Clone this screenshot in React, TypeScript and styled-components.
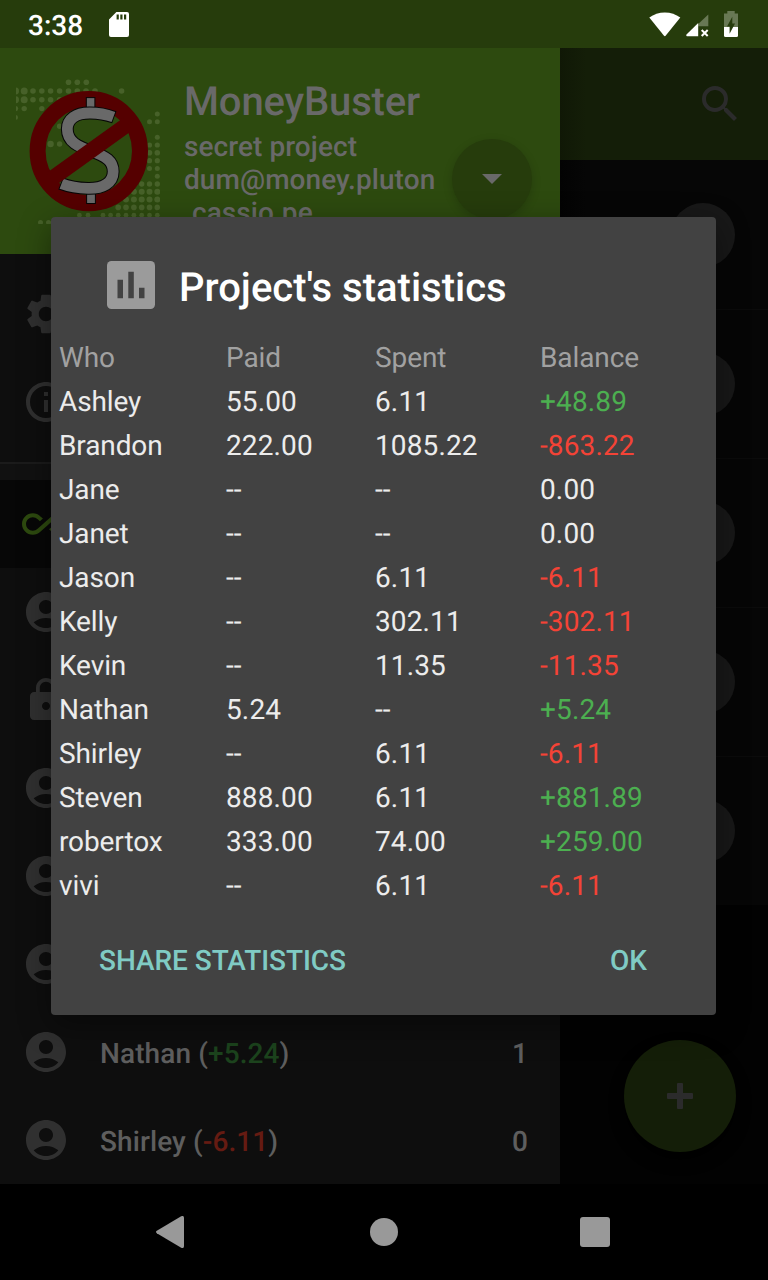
import React from "react";
import styled, { createGlobalStyle } from "styled-components";
import {
  MdSettings,
  MdInfoOutline,
  MdAllInclusive,
  MdAccountCircle,
  MdLock,
  MdSearch,
  MdArrowDropDown,
} from "react-icons/md";

const GlobalStyle = createGlobalStyle`
  *, *::before, *::after { box-sizing: border-box; }
  body {
    margin: 0;
    background: #000;
    font-family: Roboto, "Liberation Sans", sans-serif;
    text-rendering: geometricPrecision;
  }
  svg { display: block; flex: none; }
`;

const Screen = styled.div`
  position: relative;
  display: grid;
  grid-template-rows: 48px 1136px 96px;
  width: 768px;
  height: 1280px;
  overflow: hidden;
  background: #000;
`;

const StatusBar = styled.header`
  display: flex;
  align-items: center;
  padding: 0 30px 0 28px;
  background: #263c0c;
  color: #fff;
`;

const Clock = styled.span`
  font-size: 28px;
  font-weight: 500;
  line-height: 46px;
  padding-top: 3px;
  width: 81px;
`;

const StatusIcons = styled.div`
  display: flex;
  align-items: center;
  margin-left: auto;
`;

const SignalSlot = styled.div`
  padding: 2px 15px 0 5px;
`;

const Body = styled.div`
  display: flex;
  min-height: 0;
`;

const Drawer = styled.aside`
  position: relative;
  z-index: 1;
  width: 560px;
  flex: none;
  overflow: hidden;
  background: #0e0e0e;
`;

const DrawerHeader = styled.div`
  display: flex;
  height: 206px;
  padding: 28px 28px 0 16px;
  overflow: hidden;
  background: #2d4a0f;
  color: #696969;
`;

const Account = styled.div`
  flex: 1;
  margin-left: 24px;
`;

const AppName = styled.h1`
  margin: 0;
  padding-top: 1px;
  font-size: 40px;
  font-weight: 500;
  line-height: 50px;
  letter-spacing: -0.15px;
`;

const AccountLine = styled.div<{ $indent?: boolean }>`
  padding-left: ${(p) => (p.$indent ? 8 : 0)}px;
  font-size: 28px;
  font-weight: 500;
  line-height: 33px;
  letter-spacing: 0.07px;
  white-space: nowrap;

  ${AppName} + & { margin-top: 3px; }
`;

const ExpandButton = styled.button`
  display: flex;
  align-items: center;
  justify-content: center;
  width: 80px;
  height: 80px;
  margin-top: 63px;
  padding: 0 0 2px;
  border: 0;
  border-radius: 50%;
  background: #263c0c;
  color: #696969;
  box-shadow: 0 3px 10px rgba(0, 0, 0, 0.18);
`;

const MenuList = styled.nav`
  padding: 16px 0;
`;

const MenuItem = styled.div<{ $selected?: boolean; $tint?: string }>`
  display: flex;
  align-items: center;
  height: 88px;
  padding: 0 32px 0 22px;
  background: ${(p) => (p.$selected ? "#070707" : "transparent")};
  color: ${(p) => p.$tint ?? "#303030"};
`;

const MenuLabel = styled.span`
  margin-left: 30px;
  padding-top: 2px;
  font-size: 28px;
  font-weight: 500;
  letter-spacing: 0.1px;
  color: #5e5e5e;
`;

const MenuCount = styled(MenuLabel)`
  margin-left: auto;
`;

const Amount = styled.span<{ $negative?: boolean }>`
  color: ${(p) => (p.$negative ? "#651b12" : "#1c431d")};
`;

const MemberSection = styled.div`
  padding-top: 16px;
  border-top: 2px solid #1b1b1b;
  background: linear-gradient(#111, #111) 0 0 / 100% 16px no-repeat;
`;

const Content = styled.main`
  position: relative;
  flex: 1;
  background: #020202;
`;

const Toolbar = styled.div`
  display: flex;
  align-items: center;
  justify-content: flex-end;
  height: 112px;
  padding-right: 24px;
  background: linear-gradient(90deg, #101806 0, #141e08 26px);
  color: #2b2b2b;
`;

const BillRow = styled.div`
  display: flex;
  align-items: center;
  justify-content: flex-end;
  height: 149px;
  padding: 1px 33px 0 0;
  background: linear-gradient(90deg, #030303 0, #060606 26px);

  & + & { box-shadow: inset 0 1px 0 #0b0b0b; }
`;

const Avatar = styled.div`
  width: 64px;
  height: 64px;
  border-radius: 50%;
  background: #181818;
`;

const AddButton = styled.button`
  position: absolute;
  right: 32px;
  bottom: 32px;
  display: flex;
  align-items: center;
  justify-content: center;
  width: 112px;
  height: 112px;
  padding: 0;
  border: 0;
  border-radius: 50%;
  background: #141e08;
  box-shadow: 0 8px 14px #000;
`;

const NavBar = styled.footer`
  display: grid;
  grid-template-columns: 28px 28px 30px;
  column-gap: 186px;
  align-items: center;
  padding-left: 156px;
  background: #000;

  svg:nth-child(3) { margin-left: -4px; }
`;

const Dialog = styled.section`
  position: absolute;
  z-index: 2;
  top: 217px;
  left: 51px;
  width: 665px;
  height: 798px;
  border-radius: 4px;
  background: #424242;
  box-shadow: 0 10px 32px rgba(0, 0, 0, 0.42);
`;

const DialogTitle = styled.div`
  display: flex;
  align-items: center;
  gap: 24px;
  height: 118px;
  padding: 18px 56px 0;

  h2 {
    margin: 0;
    padding-top: 5px;
    color: #fff;
    font-size: 40px;
    font-weight: 500;
    line-height: 48px;
  }
`;

const StatsTable = styled.div`
  display: grid;
  grid-template-columns: 167px 149px 165px 1fr;
  grid-auto-rows: 44px;
  align-items: center;
  padding: 1px 8px 0;
  font-size: 28px;
  line-height: 44px;
`;

const Cell = styled.span<{ $tone?: "head" | "plus" | "minus" }>`
  letter-spacing: -0.1px;
  color: ${(p) =>
    p.$tone === "head"
      ? "#a1a1a1"
      : p.$tone === "plus"
        ? "#4caf50"
        : p.$tone === "minus"
          ? "#f44336"
          : "#ececec"};
`;

const NumberCell = styled(Cell)`
  letter-spacing: 0.13px;
`;

const DialogActions = styled.div`
  display: flex;
  justify-content: space-between;
  padding: 29px 69px 0 48px;
`;

const TextButton = styled.button`
  padding: 0;
  border: 0;
  background: none;
  color: #80cbc4;
  font: 500 28px/48px Roboto, "Liberation Sans", sans-serif;
  letter-spacing: -0.05px;
  text-rendering: inherit;
`;

/* Halftone map dots behind the logo: [y, radius, ...x] */
const DOTS: number[][] = [
  [82.3, 2.8, 68.5, 77.3, 86.3],
  [91, 2.8, 33, 41.8, 50.6, 59.6, 68.5, 77.3, 86, 95, 121.6],
  [91, 3.5, 15.5, 24.2],
  [99.7, 2.8, 33, 41.8, 50.6, 59.6],
  [99.7, 3.5, 15.5, 24.2],
  [108.6, 2.7, 15.5, 24.2, 41.8],
  [117.4, 2.5, 15.5],
  [126.3, 2.7, 59.6],
  [144, 3.2, 50.6],
  [144, 2.7, 59.6],
  [114, 2.5, 157.3],
  [121.8, 2.5, 149.5, 157.3],
  [137.3, 2.5, 157.3],
  [145, 2.6, 149.5, 157.3],
  [152.8, 2.8, 149.5, 157.3],
  [160.7, 2.6, 149.5, 157.3],
  [168.5, 2.5, 149.5, 157.3],
  [176.2, 2.5, 157.3],
  [184, 2.7, 141.7, 149.5, 157.3],
  [191.8, 3, 133.9, 141.7, 149.5, 157.3],
  [199.6, 3, 126, 133.9, 141.7, 149.5, 157.3],
  [207.4, 2.8, 118.2, 126, 133.9, 141.7, 149.5, 157.3],
  [215.2, 2.4, 79.4, 88, 103, 110.6, 118.2, 126, 133.9, 141.7, 149.5, 157.3],
  [222.5, 2.5, 40.5, 48.5],
];

const S_BODY =
  "C104 113.6 96 112.9 89.500 113C76 113 67.300 119 67.300 129C67.300 142 78 146.500 92 151.500C106 156.500 113.200 161 113.200 171.500C113.200 183 103 188.700 88 188.400C78 188.200 70 187";

const Logo = () => (
  <svg width="144" height="148" viewBox="16 76 144 148">
    <g fill="#476129">
      {DOTS.map(([y, r, ...xs]) =>
        xs.map((x) => <circle key={`${x}-${y}-${r}`} cx={x} cy={y} r={r} />),
      )}
    </g>
    <ellipse cx="88.8" cy="151.1" rx="51.2" ry="52.1" fill="none" stroke="#550000" strokeWidth="16" />
    <g fill="#696969" stroke="#060606" strokeWidth="1">
      <rect x="86.3" y="97.6" width="8.6" height="11" />
      <rect x="86.6" y="192" width="8.8" height="11.5" />
    </g>
    <path d={`M114.300 117.300${S_BODY} 60.600 183.500`} fill="none" stroke="#060606" strokeWidth="12.8" />
    <path d={`M113.400 117${S_BODY} 61.500 183.800`} fill="none" stroke="#696969" strokeWidth="10.8" />
    <path d="M51 179.2L128 124" stroke="#550000" strokeWidth="15.4" />
  </svg>
);

const SdCard = () => (
  <svg width="20" height="25" viewBox="0 0 20 25" fill="#fff">
    <path fillRule="evenodd" d="M7.4 0H18a2 2 0 0 1 2 2v21a2 2 0 0 1-2 2H2a2 2 0 0 1-2-2V7.4zM7.6 2.6v5h2.2v-5zm3.7 0v5h2.2v-5zm3.7 0v5h2.2v-5z" />
  </svg>
);

const Wifi = () => (
  <svg width="32" height="25" viewBox="0 0 32 25">
    <path fill="#fff" d="M.3 5.6C4.700 2.200 10 .4 15.800.4s11.100 1.800 15.500 5.200L16.800 23.600a1.300 1.300 0 0 1-2 0z" />
  </svg>
);

const Signal = () => (
  <svg width="23" height="23" viewBox="0 0 23 23">
    <path fill="#687854" d="M22.300.6V12.200H12.200V10z" />
    <path fill="#fff" d="M12.200 9V22.200H.9Q-.2 21.500.5 20.600z" />
    <path stroke="#fff" strokeWidth="2" d="m15.700 16 6 6m0-6-6 6" />
  </svg>
);

const Battery = () => (
  <svg width="14" height="26" viewBox="0 0 14 26">
    <path fill="#687854" d="M3.300 0h7.400v2.500H14V16H0V2.500h3.300z" />
    <path fill="#fff" d="M0 16h14v8.500q0 1.500-1.500 1.500h-11Q0 26 0 24.500z" />
    <path fill="#263c0c" d="M8.300 5.800v6.600H11L5.600 22.800v-7.300H3z" />
  </svg>
);

const ChartIcon = () => (
  <svg width="48" height="48" viewBox="0 0 48 48">
    <rect width="48" height="48" rx="4.500" fill="#9b9b9b" />
    <path fill="#424242" d="M10.500 18.700H16V37.300h-5.500zM21.300 10.700h5.500v26.600h-5.500zM32 26.700h5.500v10.600H32z" />
  </svg>
);

type Stat = [string, string, string, string];

const STATS: Stat[] = [
  ["Ashley", "55.00", "6.11", "+48.89"],
  ["Brandon", "222.00", "1085.22", "-863.22"],
  ["Jane", "--", "--", "0.00"],
  ["Janet", "--", "--", "0.00"],
  ["Jason", "--", "6.11", "-6.11"],
  ["Kelly", "--", "302.11", "-302.11"],
  ["Kevin", "--", "11.35", "-11.35"],
  ["Nathan", "5.24", "--", "+5.24"],
  ["Shirley", "--", "6.11", "-6.11"],
  ["Steven", "888.00", "6.11", "+881.89"],
  ["robertox", "333.00", "74.00", "+259.00"],
  ["vivi", "--", "6.11", "-6.11"],
];

const toneOf = (value: string) =>
  value.startsWith("+") ? "plus" : value.startsWith("-") ? "minus" : undefined;

export default function App() {
  return (
    <>
      <GlobalStyle />
      <Screen>
        <StatusBar>
          <Clock>3:38</Clock>
          <SdCard />
          <StatusIcons>
            <Wifi />
            <SignalSlot><Signal /></SignalSlot>
            <Battery />
          </StatusIcons>
        </StatusBar>

        <Body>
          <Drawer>
            <DrawerHeader>
              <Logo />
              <Account>
                <AppName>MoneyBuster</AppName>
                <AccountLine>secret project</AccountLine>
                <AccountLine>dum@money.pluton</AccountLine>
                <AccountLine $indent>cassio.pe</AccountLine>
              </Account>
              <ExpandButton>
                <MdArrowDropDown size={48} />
              </ExpandButton>
            </DrawerHeader>
            <MenuList>
              <MenuItem><MdSettings size={48} /></MenuItem>
              <MenuItem><MdInfoOutline size={48} /></MenuItem>
            </MenuList>
            <MemberSection>
              <MenuItem $selected $tint="#2d4a0f"><MdAllInclusive size={48} /></MenuItem>
              <MenuItem><MdAccountCircle size={48} /></MenuItem>
              <MenuItem><MdLock size={48} /></MenuItem>
              <MenuItem><MdAccountCircle size={48} /></MenuItem>
              <MenuItem><MdAccountCircle size={48} /></MenuItem>
              <MenuItem><MdAccountCircle size={48} /></MenuItem>
              <MenuItem>
                <MdAccountCircle size={48} />
                <MenuLabel>Nathan (<Amount>+5.24</Amount>)</MenuLabel>
                <MenuCount>1</MenuCount>
              </MenuItem>
              <MenuItem>
                <MdAccountCircle size={48} />
                <MenuLabel>Shirley (<Amount $negative>-6.11</Amount>)</MenuLabel>
                <MenuCount>0</MenuCount>
              </MenuItem>
            </MemberSection>
          </Drawer>

          <Content>
            <Toolbar><MdSearch size={48} /></Toolbar>
            {[0, 1, 2, 3, 4].map((row) => (
              <BillRow key={row}><Avatar /></BillRow>
            ))}
            <AddButton>
              <svg width="26" height="26" viewBox="0 0 26 26" fill="#2b2b2b">
                <rect x="10" width="6" height="26" rx="1" />
                <rect y="10" width="26" height="6" rx="1" />
              </svg>
            </AddButton>
          </Content>
        </Body>

        <NavBar>
          <svg width="28" height="32" viewBox="0 0 28 32" fill="#999">
            <path d="M25.200.3Q28-.8 28 2v28q0 2.800-2.800 1.700L.8 17.200Q-.8 16 .8 14.800z" />
          </svg>
          <svg width="28" height="28" viewBox="0 0 28 28" fill="#999">
            <circle cx="14" cy="14" r="14" />
          </svg>
          <svg width="30" height="30" viewBox="0 0 30 30" fill="#999">
            <rect width="30" height="30" rx="3" />
          </svg>
        </NavBar>

        <Dialog>
          <DialogTitle>
            <ChartIcon />
            <h2>Project's statistics</h2>
          </DialogTitle>
          <StatsTable>
            {["Who", "Paid", "Spent", "Balance"].map((label) => (
              <Cell key={label} $tone="head">{label}</Cell>
            ))}
            {STATS.map(([who, paid, spent, balance]) => (
              <React.Fragment key={who}>
                <Cell>{who}</Cell>
                <NumberCell>{paid}</NumberCell>
                <NumberCell>{spent}</NumberCell>
                <NumberCell $tone={toneOf(balance)}>{balance}</NumberCell>
              </React.Fragment>
            ))}
          </StatsTable>
          <DialogActions>
            <TextButton>SHARE STATISTICS</TextButton>
            <TextButton>OK</TextButton>
          </DialogActions>
        </Dialog>
      </Screen>
    </>
  );
}
